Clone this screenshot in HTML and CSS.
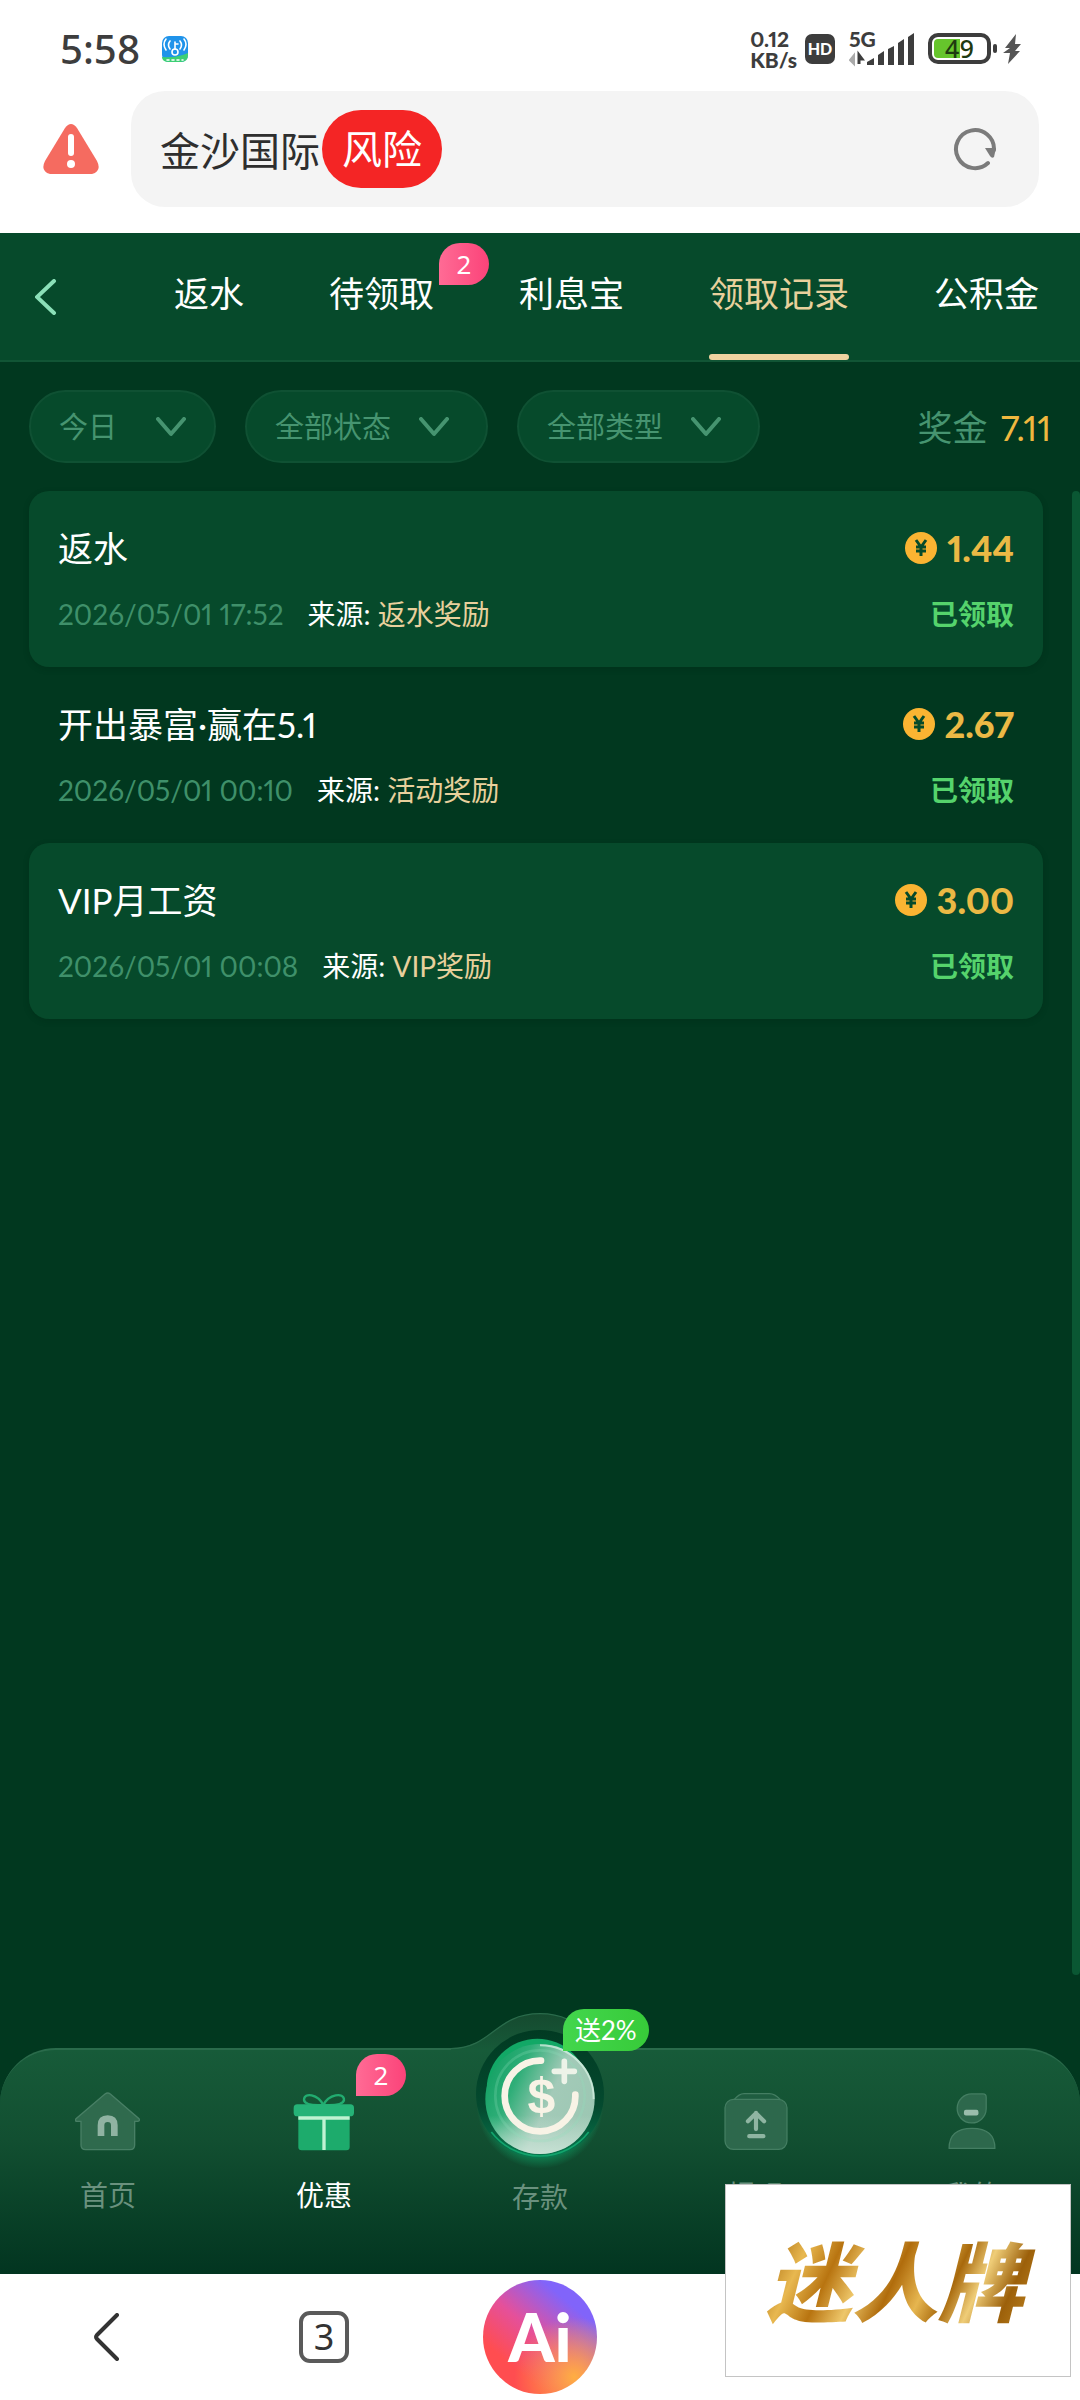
FILE: index.html
```html
<!DOCTYPE html>
<html lang="zh-CN">
<head>
  <meta charset="UTF-8">
  <meta name="viewport" content="width=device-width, initial-scale=1.0">
  <title>领取记录</title>
  <link rel="stylesheet" href="styles.css">
</head>
<body>

  <!-- phone status bar -->
  <div class="status-bar">
    <span class="clock">5:58</span>
    <svg class="app-icon" viewBox="0 0 26 26">
      <rect width="26" height="26" rx="7" fill="#1f93ea"/>
      <path d="M0 21 Q16 22 26 17 V19 Q26 26 19 26 H7 Q0 26 0 21Z" fill="#3ccf74"/>
      <g fill="none" stroke="#fff" stroke-width="1.6" stroke-linecap="round">
        <circle cx="13" cy="16" r="3"/>
        <path d="M13 13V6M13 8h3M8 5q-3 4 0 8M4 3q-4 5 0 11M18 5q3 4 0 8M22 3q4 5 0 11"/>
        <path d="M5 24h16" stroke-dasharray="2 3"/>
      </g>
    </svg>
    <div class="status-right">
      <div class="net-speed"><span>0.12</span><span>KB/s</span></div>
      <span class="hd">HD</span>
      <div class="signal">
        <span class="network">5G</span>
        <svg width="66" height="36" viewBox="0 0 66 36">
          <path d="M5 24v9l-4-4z" fill="#aaa" stroke="#aaa" stroke-width="2"/>
          <path d="M10 33v-9l3 4h-3" fill="#3d3d3d" stroke="#3d3d3d" stroke-width="3"/>
          <path d="M18 34v-3l7-4v7zM29 34v-10l6-4v14zM39 34V18l6-3v19zM49 34V12l6-4v26zM59 34V6l6-4v32z" fill="#3d3d3d"/>
        </svg>
      </div>
      <div class="battery"><span>49</span></div>
      <svg class="bolt" width="19" height="32" viewBox="0 0 19 32"><path d="M13 1 2 15h5L0 20h7L5 31 17 18h-5l6-7h-6z" fill="#555"/></svg>
    </div>
  </div>

  <!-- browser address bar -->
  <div class="address-row">
    <svg class="warning" width="56" height="50" viewBox="0 0 56 50">
      <path d="M22 4Q28-4 34 4L54 37Q59 47 49 50H7Q-3 47 2 37Z" fill="#f56b60"/>
      <path d="M28 13v16" stroke="#fff" stroke-width="6" stroke-linecap="round"/>
      <circle cx="28" cy="40" r="4" fill="#fff"/>
    </svg>
    <div class="address">
      <span class="site">金沙国际</span><span class="risk">风险</span>
      <button class="reload" aria-label="刷新">
        <svg width="44" height="44" viewBox="0 0 44 44">
          <path d="M35 36A19 19 0 1 1 41 23" fill="none" stroke="#7b7b7b" stroke-width="4" stroke-linecap="round"/>
          <path d="M32 21h11l-2 9q-2 2-4-1z" fill="#7b7b7b"/>
        </svg>
      </button>
    </div>
  </div>

  <main class="page">
    <header class="top">
      <button class="back" aria-label="返回">
        <svg width="22" height="36" viewBox="0 0 22 36"><path d="M19 2 2 18l17 16" fill="none" stroke="#8be0b8" stroke-width="4" stroke-linecap="round"/></svg>
      </button>
      <nav class="tabs">
        <a href="#">返水</a>
        <a href="#">待领取<span class="badge">2</span></a>
        <a href="#">利息宝</a>
        <a href="#" class="active">领取记录</a>
        <a href="#">公积金</a>
      </nav>
    </header>

    <div class="filters">
      <div class="filter date">
        <select aria-label="日期"><option>今日</option></select>
        <svg viewBox="0 0 30 20"><path d="M2 2l13 15L28 2"/></svg>
      </div>
      <div class="filter">
        <select aria-label="状态"><option>全部状态</option></select>
        <svg viewBox="0 0 30 20"><path d="M2 2l13 15L28 2"/></svg>
      </div>
      <div class="filter">
        <select aria-label="类型"><option>全部类型</option></select>
        <svg viewBox="0 0 30 20"><path d="M2 2l13 15L28 2"/></svg>
      </div>
      <div class="total">奖金 <b>7.11</b></div>
    </div>

    <div class="scroll-area">
      <ul class="records">
        <li>
          <div class="row title">
            <span>返水</span>
            <span class="amount"><svg viewBox="0 0 32 32"><circle cx="16" cy="16" r="16"/><path d="M11 8l5 7 5-7M11 15h10M11 19h10M16 15v9"/></svg>1.44</span>
          </div>
          <div class="row detail">
            <time>2026/05/01 17:52</time>
            <span>来源: <em>返水奖励</em></span>
            <span class="state">已领取</span>
          </div>
        </li>
        <li>
          <div class="row title">
            <span>开出暴富·赢在5.1</span>
            <span class="amount"><svg viewBox="0 0 32 32"><circle cx="16" cy="16" r="16"/><path d="M11 8l5 7 5-7M11 15h10M11 19h10M16 15v9"/></svg>2.67</span>
          </div>
          <div class="row detail">
            <time>2026/05/01 00:10</time>
            <span>来源: <em>活动奖励</em></span>
            <span class="state">已领取</span>
          </div>
        </li>
        <li>
          <div class="row title">
            <span>VIP月工资</span>
            <span class="amount"><svg viewBox="0 0 32 32"><circle cx="16" cy="16" r="16"/><path d="M11 8l5 7 5-7M11 15h10M11 19h10M16 15v9"/></svg>3.00</span>
          </div>
          <div class="row detail">
            <time>2026/05/01 00:08</time>
            <span>来源: <em>VIP奖励</em></span>
            <span class="state">已领取</span>
          </div>
        </li>
      </ul>
      <div class="scroll-thumb"></div>
    </div>

    <nav class="bottom-nav">
      <svg class="bump" viewBox="151 60 540 120">
        <defs>
          <linearGradient id="bumpFill" x1="0" y1="0" x2="0" y2="1">
            <stop offset="0" stop-color="#154a2f"/>
            <stop offset="1" stop-color="#175a39"/>
          </linearGradient>
        </defs>
        <path d="M154 180V174C280 174 285 71 421 71S562 174 688 174V180Z" fill="url(#bumpFill)"/>
        <path d="M154 176C280 174 285 71 421 71S562 174 688 176" fill="none" stroke="#2a6b4b" stroke-width="4"/>
      </svg>
      <a href="#">
        <svg class="icon" viewBox="224 302 198 180">
          <path d="M314 311q8-6 16 0l86 74q4 8-5 8h-8v71q0 14-14 14h-133q-14 0-14-14v-71h-11q-9 0-4-8z" fill="#2f6a4d" stroke="#487f65" stroke-width="4"/>
          <path d="M302 437v-32q0-20 20-20t20 20v32" fill="none" stroke="#90b3a2" stroke-width="20"/>
        </svg>
        首页
      </a>
      <a href="#" class="active">
        <svg class="icon" viewBox="873 302 198 180">
          <path d="M970 344c-16-32-58-40-58-15q3 18 58 15c16-32 62-40 62-15q-3 18-62 15" fill="none" stroke="#22ac70" stroke-width="7"/>
          <rect x="895" y="365" width="154" height="115" rx="10" fill="#1dab6c"/>
          <rect x="881" y="342" width="181" height="36" rx="11" fill="#25b377"/>
          <path d="M895 383h154M972 387v92" stroke="#bff3d2" stroke-width="10"/>
        </svg>
        <span class="badge">2</span>
        优惠
      </a>
      <a href="#" class="deposit">
        <svg class="ball" viewBox="196 89 450 450">
          <defs>
            <radialGradient id="glow">
              <stop offset="75%" stop-color="#0f9a62" stop-opacity=".8"/>
              <stop offset="100%" stop-color="#0f9a62" stop-opacity="0"/>
            </radialGradient>
            <linearGradient id="ring" x1="0" y1="0" x2="0" y2="1">
              <stop offset="0" stop-color="#013a22"/>
              <stop offset=".6" stop-color="#044a2f"/>
              <stop offset="1" stop-color="#087a50"/>
            </linearGradient>
            <linearGradient id="ball" x1="0" y1=".15" x2="1" y2=".6">
              <stop offset="0" stop-color="#0e9f60"/>
              <stop offset=".3" stop-color="#2fae78"/>
              <stop offset=".62" stop-color="#a3cab8"/>
              <stop offset="1" stop-color="#9cc7b3"/>
            </linearGradient>
            <linearGradient id="shine" x1="0" y1="0" x2="0" y2="1">
              <stop offset=".65" stop-color="#d8ebe1" stop-opacity="0"/>
              <stop offset="1" stop-color="#d8ebe1" stop-opacity=".7"/>
            </linearGradient>
          </defs>
          <circle cx="421" cy="345" r="190" fill="url(#glow)"/>
          <circle cx="421" cy="311" r="192" fill="url(#ring)"/>
          <path d="M275 425A184 184 0 0 0 567 425" fill="none" stroke="#12a46c" stroke-width="5"/>
          <circle cx="413" cy="297" r="152" fill="#12a866"/>
          <ellipse cx="421" cy="326" rx="164" ry="165" fill="url(#ball)"/>
          <ellipse cx="421" cy="326" rx="164" ry="165" fill="url(#shine)"/>
          <path d="M421 165A162 158 0 0 1 582 326" fill="none" stroke="#d9f3e6" stroke-opacity=".7" stroke-width="6"/>
          <ellipse cx="421" cy="316" rx="134" ry="136" fill="none" stroke="#8fe0bb" stroke-opacity=".25" stroke-width="8"/>
          <path d="M424 211A106 106 0 1 0 527 313" fill="none" stroke="#f8f3e6" stroke-width="20" stroke-linecap="round"/>
          <path d="M494 213v60M464 243h60" stroke="#edf3e8" stroke-width="17" stroke-linecap="round"/>
          <text x="425" y="369" text-anchor="middle" class="dollar">$</text>
        </svg>
        <span class="promo">送2%</span>
        存款
      </a>
      <a href="#">
        <svg class="icon" viewBox="128 302 198 186">
          <path d="M160 328q14-18 30-18h78q18 0 34 18" fill="#1f5d40" stroke="#447e62" stroke-width="4"/>
          <rect x="131" y="328" width="192" height="155" rx="26" fill="#2d684c" stroke="#447e62" stroke-width="4"/>
          <path d="M227 420v-50M202 396l25-25 25 25M206 442h44" fill="none" stroke="#8fb5a2" stroke-width="13" stroke-linecap="round" stroke-linejoin="round"/>
        </svg>
        提现
      </a>
      <a href="#">
        <svg class="icon" viewBox="778 302 198 186">
          <path d="M877 311h34q10 0 10 10v36a45 45 0 1 1-44-46z" fill="#2d684c" stroke="#447e62" stroke-width="4"/>
          <path d="M806 480q0-62 71-62t71 62z" fill="#2d684c" stroke="#447e62" stroke-width="4" stroke-linejoin="round"/>
          <rect x="852" y="360" width="45" height="18" rx="6" fill="#9bbdac"/>
        </svg>
        我的
      </a>
    </nav>
  </main>

  <!-- browser toolbar -->
  <div class="toolbar">
    <button aria-label="后退">
      <svg width="28" height="48" viewBox="0 0 28 48"><path d="M23 2 3 22q-2 2 0 4l20 20" fill="none" stroke="#333" stroke-width="4" stroke-linecap="round"/></svg>
    </button>
    <button><span class="tab-count">3</span></button>
    <button><span class="ai">Ai</span></button>
    <span></span>
    <span></span>
  </div>

  <a href="#" class="float-ad"><span>迷人牌</span></a>

</body>
</html>
```

FILE: styles.css
```css
* {
  box-sizing: border-box;
}
body {
  margin: 0;
  min-height: 100vh;
  display: flex;
  flex-direction: column;
  position: relative;
  background: white;
  font-family: Lato, "Noto Sans CJK SC", sans-serif;
  font-size: 29px;
  font-variant-numeric: proportional-nums;
  color: white;
}
a {
  color: inherit;
  text-decoration: none;
}
button {
  border: none;
  background: none;
  padding: 0;
  font-family: inherit;
  cursor: pointer;
}
svg {
  display: block;
  flex-shrink: 0;
}

/* status bar */
.status-bar {
  display: flex;
  align-items: center;
  height: 91px;
  padding: 6px 58px 0 60px;
  color: #3d3d3d;
}
.clock {
  font-family: "Noto Sans", sans-serif;
  font-size: 40px;
  font-weight: 500;
}
.app-icon {
  width: 26px;
  height: 26px;
  margin-left: 22px;
}
.status-right {
  display: flex;
  align-items: center;
  margin-left: auto;
}
.net-speed {
  display: flex;
  flex-direction: column;
  font-size: 21px;
  line-height: 21px;
  font-weight: 900;
}
.hd {
  width: 30px;
  margin-left: 8px;
  border-radius: 7px;
  background: #3d3d3d;
  color: white;
  font-size: 16px;
  line-height: 30px;
  font-weight: 900;
  text-align: center;
}
.signal {
  position: relative;
  margin-left: 14px;
}
.network {
  position: absolute;
  left: 0;
  top: 0;
  font-size: 21px;
  line-height: 16px;
  font-weight: 900;
}
.battery {
  position: relative;
  width: 63px;
  height: 31px;
  margin-left: 13px;
  border: 4px solid #3d3d3d;
  border-radius: 10px;
  background: linear-gradient(90deg, #66c52c 26px, white 26px) content-box;
  padding: 2px;
}
.battery span {
  display: block;
  font-family: "Noto Sans", sans-serif;
  font-size: 25px;
  line-height: 19px;
  font-weight: 500;
  text-align: center;
  color: #1f3a10;
}
.battery::after {
  content: "";
  position: absolute;
  right: -10px;
  top: 7px;
  width: 4px;
  height: 9px;
  border-radius: 2px;
  background: #3d3d3d;
}
.bolt {
  margin-left: 12px;
}

/* address bar */
.address-row {
  display: flex;
  align-items: center;
  margin-bottom: 26px;
  padding: 0 41px 0 43px;
}
.address {
  flex: 1;
  display: flex;
  align-items: center;
  height: 116px;
  margin-left: 32px;
  padding: 0 42px 0 29px;
  border-radius: 34px;
  background: #f4f4f4;
  font-size: 40px;
}
.site {
  color: #2e2e2e;
}
.risk {
  padding: 0 20px;
  margin-left: 2px;
  border-radius: 39px;
  background: #f42525;
  line-height: 78px;
}
.reload {
  margin-left: auto;
}

/* page */
.page {
  flex: 1;
  display: flex;
  flex-direction: column;
  background: #01381f;
}
.top {
  display: flex;
  justify-content: space-between;
  height: 129px;
  padding: 0 41px 0 35px;
  background: #064a2b;
  border-bottom: 2px solid #115535;
}
.tabs {
  display: flex;
  gap: 85px;
  font-size: 35px;
}
.tabs a {
  position: relative;
  line-height: 121px;
  border-bottom: 6px solid transparent;
}
.tabs .active {
  color: #e8d09c;
}
.tabs .active::after {
  content: "";
  position: absolute;
  left: 0;
  right: 0;
  bottom: -6px;
  height: 6px;
  border-radius: 3px;
  background: #efd3a0;
}
.badge {
  position: absolute;
  width: 50px;
  border-radius: 21px 21px 21px 0;
  background: linear-gradient(90deg, #ff6b95, #fb4379);
  color: white;
  font-family: "Noto Sans", sans-serif;
  font-size: 26px;
  line-height: 42px;
  text-align: center;
}
.tabs .badge {
  left: 110px;
  top: 10px;
}

.filters {
  display: flex;
  align-items: center;
  gap: 29px;
  padding: 28px 29px;
}
.filter {
  position: relative;
}
.filter select {
  display: block;
  appearance: none;
  width: 243px;
  height: 73px;
  padding: 0 28px;
  border: 2px solid #0f5133;
  border-radius: 37px;
  background: #064a2b;
  color: #469470;
  font-family: inherit;
  font-size: 29px;
}
.filter svg {
  position: absolute;
  right: 39px;
  top: 27px;
  width: 30px;
  height: 20px;
  fill: none;
  stroke: #469470;
  stroke-width: 4;
  stroke-linecap: round;
  stroke-linejoin: round;
  pointer-events: none;
}
.filter.date select {
  width: 187px;
}
.filter.date svg {
  right: 30px;
}
.total {
  display: flex;
  gap: 13px;
  margin-left: auto;
  font-size: 35px;
  line-height: 60px;
  color: #469470;
}
.total b {
  font-weight: normal;
  color: #f0b83f;
}

.scroll-area {
  flex: 1;
  display: flex;
  margin-bottom: 73px;
}
.records {
  flex: 1;
  margin: 0 29px;
  padding: 0;
  list-style: none;
}
.records li {
  padding: 30px 29px 29px;
  border-radius: 20px;
}
.records li:nth-child(odd) {
  background: #064a2b;
  box-shadow: 0 2px 6px rgba(0, 30, 15, 0.2);
}
.row {
  display: flex;
  align-items: center;
}
.title {
  justify-content: space-between;
  font-size: 35px;
  line-height: 54px;
}
.amount {
  display: flex;
  align-items: center;
  gap: 10px;
  font-size: 36px;
  font-weight: 900;
  color: #ebb945;
}
.amount svg {
  width: 32px;
  height: 32px;
  fill: #fab432;
}
.amount path {
  fill: none;
  stroke: #064a2b;
  stroke-width: 3;
}
.detail {
  gap: 24px;
  margin-top: 15px;
  font-size: 28px;
  line-height: 48px;
}
.detail time {
  color: #3f906a;
}
.detail em {
  font-style: normal;
  color: #e8d09c;
}
.state {
  margin-left: auto;
  font-weight: bold;
  color: #55d36c;
}
.scroll-thumb {
  width: 8px;
  border-radius: 4px;
  background: #0a5733;
}

/* bottom nav */
.bottom-nav {
  position: relative;
  display: grid;
  grid-template-columns: repeat(5, 1fr);
  height: 226px;
  border-top: 2px solid #2a6b4b;
  border-radius: 56px 56px 0 0;
  background: linear-gradient(#175b39, #124f31 40%, #023520);
}
.bottom-nav a {
  position: relative;
  display: flex;
  flex-direction: column;
  align-items: center;
  gap: 24px;
  padding-top: 41px;
  font-size: 28px;
  line-height: 40px;
  color: #6a917e;
}
.bottom-nav .active {
  color: white;
}
.icon {
  width: 66px;
  height: 60px;
}
.bottom-nav .badge {
  left: calc(50% + 32px);
  top: 4px;
  font-size: 26px;
  line-height: 42px;
}
.bump {
  position: absolute;
  left: calc(50% - 90px);
  top: -40px;
  width: 180px;
  height: 40px;
}
.bottom-nav .deposit {
  padding-top: 127px;
}
.ball {
  position: absolute;
  left: calc(50% - 75px);
  top: -30px;
  width: 150px;
  height: 150px;
}
.dollar {
  font-family: "Liberation Sans", sans-serif;
  font-size: 150px;
  font-weight: bold;
  fill: #f8f3e6;
}
.promo {
  position: absolute;
  left: calc(50% + 23px);
  top: -41px;
  padding: 0 12px;
  border-radius: 21px 21px 21px 0;
  background: linear-gradient(90deg, #43d64d, #37cb39);
  color: white;
  font-size: 26px;
  line-height: 42px;
  white-space: nowrap;
}

/* browser toolbar */
.toolbar {
  display: grid;
  grid-template-columns: repeat(5, 1fr);
  height: 126px;
  color: #333;
}
.toolbar button {
  display: flex;
  align-items: center;
  justify-content: center;
  color: #333;
}
.tab-count {
  width: 50px;
  border: 4px solid #5a5a5a;
  border-radius: 11px;
  font-family: "Noto Sans", sans-serif;
  font-size: 36px;
  line-height: 44px;
}
.ai {
  width: 114px;
  border-radius: 50%;
  background: radial-gradient(circle at 80% 85%, #ffae42, rgba(255, 140, 80, 0) 45%), linear-gradient(40deg, #ff4d50 25%, #e5509a 50%, #8164fa 78%);
  color: white;
  font-size: 66px;
  font-weight: 900;
  line-height: 114px;
}

.float-ad {
  position: absolute;
  right: 9px;
  bottom: 23px;
  width: 346px;
  height: 193px;
  padding-right: 6px;
  border: 1px solid #c4c4c4;
  background: white;
  font-family: "Noto Sans CJK SC", sans-serif;
  font-size: 86px;
  font-weight: 900;
  font-style: italic;
  line-height: 186px;
  text-align: center;
}
.float-ad span {
  padding: 0 12px;
  background: linear-gradient(115deg, #a8690c 8%, #e8b850 20%, #b87410 30%, #eec76a 40%, #b06c0c 50%, #e6b650 60%, #a8690c 68%, #efcd78 76%, #9c600a 86%, #c98f28);
  background-clip: text;
  -webkit-background-clip: text;
  color: transparent;
}
```
